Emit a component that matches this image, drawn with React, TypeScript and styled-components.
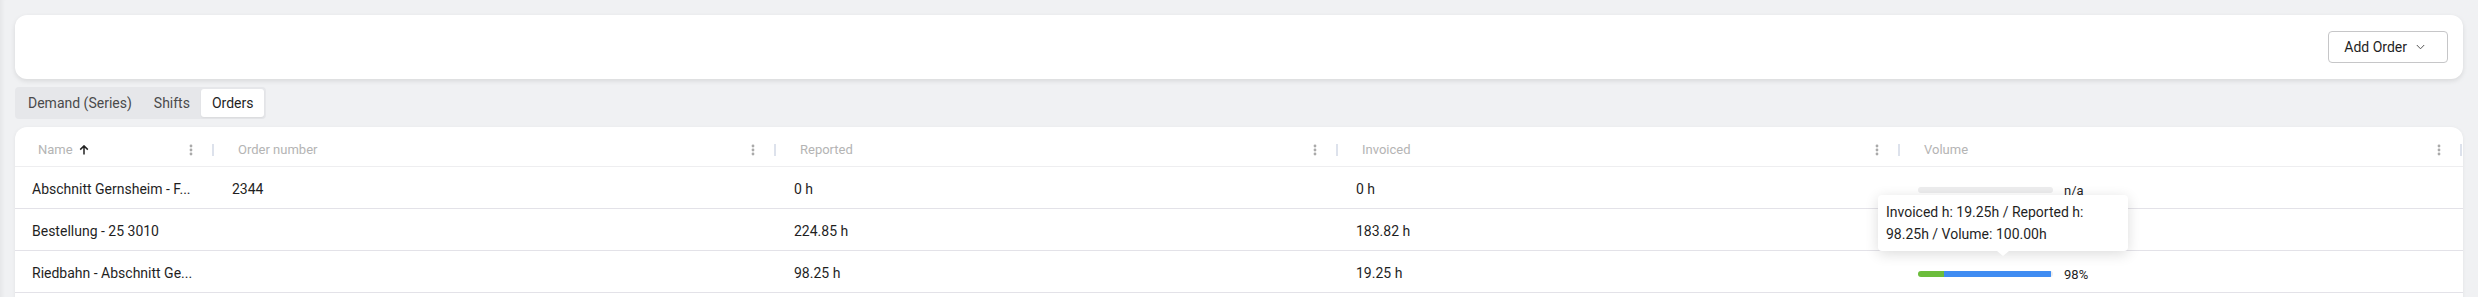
import styled, { createGlobalStyle } from 'styled-components';

const GlobalStyle = createGlobalStyle`
  body {
    margin: 0;
    background: #f0f1f3;
    font-family: Roboto, "Liberation Sans", sans-serif;
    color: #1f1f1f;
  }
`;

const Page = styled('main')`
  padding: 15px;
  display: flex;
  flex-direction: column;
  gap: 8px;
  min-height: 100vh;
  box-sizing: border-box;
  box-shadow: inset 5px 0 4px -3px rgba(0, 0, 0, 0.05);
`;

const Toolbar = styled('section')`
  height: 64px;
  background: #fff;
  border-radius: 12px;
  box-shadow: 0 2px 5px rgba(0, 0, 0, 0.1);
  display: flex;
  align-items: center;
  justify-content: flex-end;
  padding: 0 15px;
`;

const AddButton = styled('button')`
  height: 32px;
  display: flex;
  align-items: center;
  gap: 9px;
  padding: 0 22px 0 15px;
  border: 1px solid #c6c6c8;
  border-radius: 4px;
  background: #fff;
  font-family: inherit;
  font-size: 14px;
  color: #1f1f1f;
  cursor: pointer;
`;

const TabList = styled('nav')`
  align-self: flex-start;
  display: flex;
  padding: 2px;
  height: 32px;
  box-sizing: border-box;
  background: #e6e7ea;
  border-radius: 4px;
`;

const Tab = styled('button')<{ $active?: boolean }>`
  border: none;
  padding: 0 11px;
  height: 28px;
  font-family: inherit;
  font-size: 14px;
  border-radius: 3px;
  cursor: pointer;
  background: ${(p) => (p.$active ? '#fff' : 'transparent')};
  color: ${(p) => (p.$active ? '#1f1f1f' : '#4a4a4a')};
  box-shadow: ${(p) => (p.$active ? '0 1px 2px rgba(0,0,0,0.06)' : 'none')};
`;

const TableCard = styled('section')`
  background: #fff;
  border-radius: 12px 12px 0 0;
  box-shadow: 0 1px 4px rgba(0, 0, 0, 0.06);
  padding-bottom: 40px;
`;

const Row = styled('div')<{ $head?: boolean }>`
  display: grid;
  grid-template-columns: 200px repeat(4, 1fr);
  height: ${(p) => (p.$head ? '40px' : '42px')};
  box-sizing: border-box;
  border-bottom: 1px solid ${(p) => (p.$head ? '#eeeef0' : '#e3e2e8')};
`;

const HeadCell = styled('div')`
  display: flex;
  align-items: center;
  padding: 6px 1px 0 23px;
  font-size: 13px;
  color: #b4b4b4;
  min-width: 0;
`;

const HeadLabel = styled('span')`
  display: flex;
  align-items: center;
  gap: 6px;
`;

const HeadTools = styled('span')`
  margin-left: auto;
  display: flex;
  align-items: center;
  gap: 19px;
`;

const Separator = styled('span')`
  width: 2px;
  height: 12px;
  background: #dde2ec;
`;

const Cell = styled('div')`
  display: flex;
  align-items: center;
  padding: 3px 8px 0 17px;
  font-size: 14px;
  color: #1f1f1f;
  min-width: 0;
  white-space: nowrap;
`;

const VolumeCell = styled(Cell)`
  position: relative;
  gap: 11px;
  padding-top: 5px;
`;

const Bar = styled('div')`
  width: 135px;
  height: 6px;
  border-radius: 3px;
  background: #ededee;
  display: flex;
  overflow: hidden;
`;

const BarPart = styled('div')<{ $color: string }>`
  height: 100%;
  background: ${(p) => p.$color};
`;

const BarLabel = styled('span')`
  font-size: 13px;
  color: #1f1f1f;
`;

const Tooltip = styled('div')`
  position: absolute;
  left: -23px;
  bottom: 41px;
  width: 250px;
  box-sizing: border-box;
  padding: 6px 8px;
  background: #fff;
  border-radius: 4px;
  box-shadow: 0 3px 14px rgba(0, 0, 0, 0.14);
  font-size: 14px;
  line-height: 22px;
  white-space: normal;
  color: #1f1f1f;
  z-index: 2;

  &::after {
    content: '';
    position: absolute;
    left: 50%;
    bottom: -5px;
    transform: translateX(-50%);
    border-left: 6px solid transparent;
    border-right: 6px solid transparent;
    border-top: 5px solid #fff;
  }
`;

const Kebab = () => (
  <svg width="4" height="12" viewBox="0 0 4 12">
    <circle cx="2" cy="2" r="1.4" fill="#aaa" />
    <circle cx="2" cy="6" r="1.4" fill="#aaa" />
    <circle cx="2" cy="10" r="1.4" fill="#aaa" />
  </svg>
);

const SortUp = () => (
  <svg width="10" height="10" viewBox="0 0 10 10" fill="none">
    <path d="M5 9.5V1M1.2 4.6L5 0.9l3.8 3.7" stroke="#222" strokeWidth="1.5" />
  </svg>
);

const Chevron = () => (
  <svg width="9" height="6" viewBox="0 0 9 6" fill="none">
    <path d="M0.8 1l3.7 3.8L8.2 1" stroke="#555" strokeWidth="1" />
  </svg>
);

const columns = ['Name', 'Order number', 'Reported', 'Invoiced', 'Volume'];

type Order = {
  name: string;
  number: string;
  reported: string;
  invoiced: string;
  invoicedH: number;
  reportedH: number;
  volume: number | null;
};

const orders: Order[] = [
  { name: 'Abschnitt Gernsheim - F...', number: '2344', reported: '0 h', invoiced: '0 h', invoicedH: 0, reportedH: 0, volume: null },
  { name: 'Bestellung - 25 3010', number: '', reported: '224.85 h', invoiced: '183.82 h', invoicedH: 183.82, reportedH: 224.85, volume: null },
  { name: 'Riedbahn - Abschnitt Ge...', number: '', reported: '98.25 h', invoiced: '19.25 h', invoicedH: 19.25, reportedH: 98.25, volume: 100 },
];

const Volume = ({ order, tooltip }: { order: Order; tooltip?: boolean }) => {
  if (order.volume === null) {
    // row 2's bar sits under the tooltip in the screenshot
    return order.reportedH === 0 ? (
      <VolumeCell>
        <Bar />
        <BarLabel>n/a</BarLabel>
      </VolumeCell>
    ) : (
      <VolumeCell />
    );
  }
  const inv = (order.invoicedH / order.volume) * 100;
  const rep = (order.reportedH / order.volume) * 100;
  return (
    <VolumeCell>
      <Bar>
        <BarPart $color="#6cbd3c" style={{ width: `${inv}%` }} />
        <BarPart $color="#3f8cf2" style={{ width: `${rep - inv}%` }} />
      </Bar>
      <BarLabel>{Math.round(rep)}%</BarLabel>
      {tooltip && (
        <Tooltip>
          Invoiced h: {order.invoicedH.toFixed(2)}h / Reported h: {order.reportedH.toFixed(2)}h / Volume:{' '}
          {order.volume.toFixed(2)}h
        </Tooltip>
      )}
    </VolumeCell>
  );
};

const App = () => {
  return (
    <>
      <GlobalStyle />
      <Page>
        <Toolbar>
          <AddButton>
            Add Order
            <Chevron />
          </AddButton>
        </Toolbar>
        <TabList>
          <Tab>Demand (Series)</Tab>
          <Tab>Shifts</Tab>
          <Tab $active>Orders</Tab>
        </TabList>
        <TableCard>
          <Row $head>
            {columns.map((c, i) => (
              <HeadCell key={c}>
                <HeadLabel>
                  {c}
                  {i === 0 && <SortUp />}
                </HeadLabel>
                <HeadTools>
                  <Kebab />
                  <Separator />
                </HeadTools>
              </HeadCell>
            ))}
          </Row>
          {orders.map((o, i) => (
            <Row key={o.name}>
              <Cell>{o.name}</Cell>
              <Cell>{o.number}</Cell>
              <Cell>{o.reported}</Cell>
              <Cell>{o.invoiced}</Cell>
              <Volume order={o} tooltip={i === 2} />
            </Row>
          ))}
        </TableCard>
      </Page>
    </>
  );
};

export default App;
